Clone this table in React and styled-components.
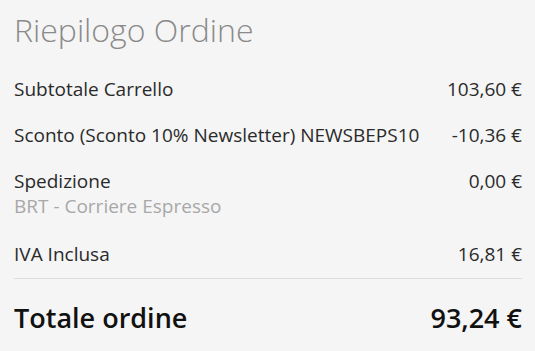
import React from 'react';
import styled, { createGlobalStyle } from 'styled-components';

const GlobalStyle = createGlobalStyle`
  html, body {
    margin: 0;
    padding: 0;
    background: #f5f5f5;
  }
  body {
    font-family: "Open Sans", "Liberation Sans", sans-serif;
  }
`;

const Summary = styled.section`
  width: 535px;
  height: 351px;
  box-sizing: border-box;
  padding: 10px 13px 0 14px;
  background: #f5f5f5;
`;

const Title = styled.h2`
  margin: 0 0 17px;
  font-size: 32px;
  font-weight: 300;
  line-height: 40px;
  color: #8a8a8a;
`;

const Row = styled.div`
  display: flex;
  justify-content: space-between;
  align-items: flex-start;
  padding: 10px 0 11px;
  font-size: 19px;
  line-height: 25px;
  color: #2a2a2a;
  border-bottom: ${props => (props.divider ? '1px solid #dcdcdc' : 'none')};
`;

const Label = styled.div`
  display: flex;
  flex-direction: column;
`;

const Note = styled.span`
  margin-bottom: 2px;
  color: #a8a8a8;
`;

const Amount = styled.span`
  white-space: nowrap;
`;

const TotalRow = styled.div`
  display: flex;
  justify-content: space-between;
  align-items: baseline;
  padding-top: 21px;
  font-size: 27px;
  font-weight: 600;
  line-height: 36px;
  color: #111;
`;

const rows = [
  { label: 'Subtotale Carrello', amount: '103,60 €' },
  { label: 'Sconto (Sconto 10% Newsletter) NEWSBEPS10', amount: '-10,36 €' },
  { label: 'Spedizione', note: 'BRT - Corriere Espresso', amount: '0,00 €' },
  { label: 'IVA Inclusa', amount: '16,81 €', divider: true },
];

export default function App() {
  return (
    <>
      <GlobalStyle />
      <Summary>
        <Title>Riepilogo Ordine</Title>
        {rows.map(row => (
          <Row key={row.label} divider={row.divider}>
            <Label>
              {row.label}
              {row.note && <Note>{row.note}</Note>}
            </Label>
            <Amount>{row.amount}</Amount>
          </Row>
        ))}
        <TotalRow>
          <span>Totale ordine</span>
          <span>93,24 €</span>
        </TotalRow>
      </Summary>
    </>
  );
}
